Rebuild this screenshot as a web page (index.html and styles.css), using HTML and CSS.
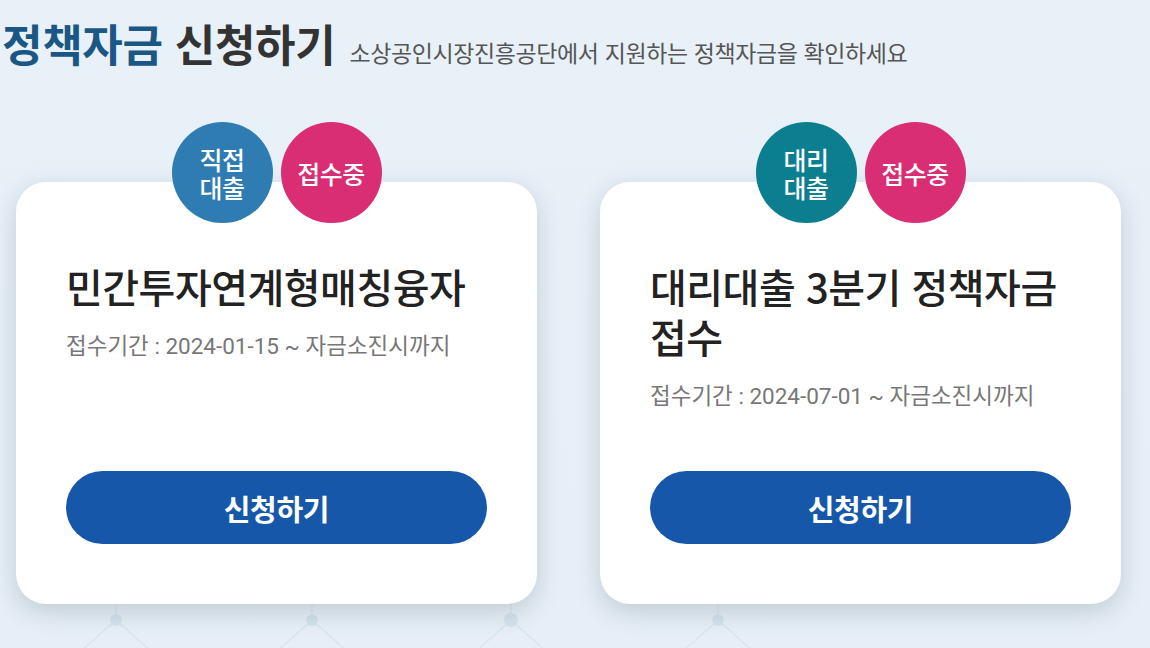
FILE: index.html
```html
<!DOCTYPE html>
<html lang="ko">
<head>
<meta charset="utf-8">
<title>정책자금 신청하기</title>
<link rel="stylesheet" href="styles.css">
</head>
<body>
<div class="page">
  <svg class="net" width="1150" height="80" viewBox="0 0 1150 80" aria-hidden="true">
    <g stroke="#d6e4ee" stroke-width="1.2" fill="none">
      <path d="M116 0V30M116 30L60 80M116 30L172 80"/>
      <path d="M312 0V30M312 30L256 80M312 30L368 80"/>
      <path d="M511 0V30M511 30L455 80M511 30L567 80"/>
      <path d="M718 0V30M718 30L662 80M718 30L774 80"/>
    </g>
    <g fill="#d3e3ec">
      <circle cx="116" cy="30" r="6"/>
      <circle cx="312" cy="30" r="6"/>
      <circle cx="511" cy="30" r="7"/>
      <circle cx="718" cy="30" r="6"/>
    </g>
  </svg>
  <header class="head">
    <h1 class="title"><span class="accent">정책자금</span> 신청하기</h1>
    <p class="sub">소상공인시장진흥공단에서 지원하는 정책자금을 확인하세요</p>
  </header>
  <main class="cards">
    <article class="card">
      <div class="badges">
        <span class="badge blue"><span class="bl">직접</span><span class="bl">대출</span></span>
        <span class="badge pink">접수중</span>
      </div>
      <h2 class="card-title">민간투자연계형매칭융자</h2>
      <p class="period">접수기간 : 2024-01-15 ~ 자금소진시까지</p>
      <a class="btn" href="#">신청하기</a>
    </article>
    <article class="card">
      <div class="badges">
        <span class="badge teal"><span class="bl">대리</span><span class="bl">대출</span></span>
        <span class="badge pink">접수중</span>
      </div>
      <h2 class="card-title">대리대출 3분기 정책자금 접수</h2>
      <p class="period">접수기간 : 2024-07-01 ~ 자금소진시까지</p>
      <a class="btn" href="#">신청하기</a>
    </article>
  </main>
</div>
</body>
</html>
```
FILE: styles.css
```css
* { box-sizing: border-box; }
html, body { margin: 0; padding: 0; }
body {
  background: #e7f0f8;
  font-family: "Noto Sans CJK KR", "Noto Sans", sans-serif;
  width: 1150px;
  height: 648px;
  overflow: hidden;
}
.page {
  position: relative;
  height: 648px;
  background: linear-gradient(180deg, #e8f0f8 0%, #e6eff7 100%);
}
.net {
  position: absolute;
  left: 0;
  top: 590px;
}
.head {
  display: flex;
  align-items: baseline;
  gap: 14px;
  padding: 17px 0 0 2px;
}
.title {
  margin: 0;
  font-size: 44px;
  line-height: 52px;
  font-weight: 700;
  color: #333;
  letter-spacing: -0.3px;
}
.accent { color: #1b5784; }
.sub {
  margin: 0;
  font-size: 23px;
  line-height: 30px;
  color: #555;
  letter-spacing: -0.4px;
}
.cards {
  display: flex;
  gap: 63px;
  padding: 113px 0 0 16px;
  position: relative;
}
.card {
  position: relative;
  width: 521px;
  height: 422px;
  background: #fff;
  border-radius: 30px;
  box-shadow: 0 8px 24px rgba(60, 80, 100, 0.22);
  padding: 79px 50px 60px;
  display: flex;
  flex-direction: column;
}
.badges {
  position: absolute;
  top: -60px;
  left: 0;
  right: 0;
  display: flex;
  justify-content: center;
  gap: 8px;
}
.badge {
  width: 101px;
  height: 101px;
  border-radius: 50%;
  display: flex;
  flex-direction: column;
  align-items: center;
  justify-content: center;
  text-align: center;
  color: #fff;
  font-size: 25px;
  line-height: 30px;
  font-weight: 500;
  letter-spacing: -0.5px;
}
.bl {
  display: block;
  height: 28px;
  line-height: 28px;
}
.blue { background: #2e7cb1; }
.teal { background: #0b7e90; }
.pink { background: #d92e73; }
.card-title {
  margin: 0;
  font-size: 40px;
  line-height: 50px;
  font-weight: 500;
  color: #222;
  letter-spacing: -0.5px;
  word-break: keep-all;
}
.period {
  margin: 20px 0 0;
  font-family: Roboto, "Noto Sans CJK KR", sans-serif;
  font-size: 22.5px;
  line-height: 30px;
  color: #777;
  letter-spacing: 0;
}
.btn {
  margin-top: auto;
  display: flex;
  align-items: center;
  justify-content: center;
  height: 73px;
  border-radius: 37px;
  background: #1757aa;
  color: #fff;
  text-decoration: none;
  font-size: 29px;
  font-weight: 700;
  letter-spacing: -0.3px;
}
```
